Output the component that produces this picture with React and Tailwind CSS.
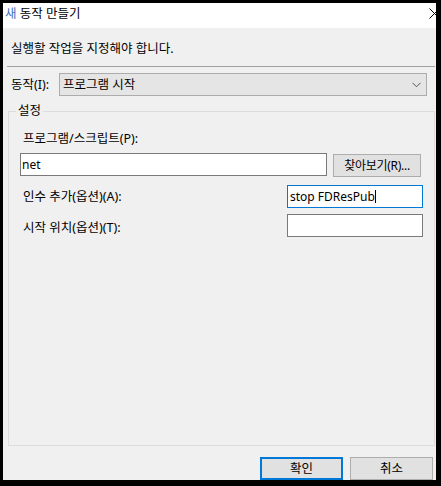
import React from "react";

const font = { fontFamily: '"Noto Sans", "Noto Sans CJK KR", sans-serif' };

function Chevron() {
  return (
    <svg width="9" height="6" viewBox="0 0 9 6" className="shrink-0">
      <path d="M0.5 0.8 L4.5 4.8 L8.5 0.8" fill="none" stroke="#555" strokeWidth="1" />
    </svg>
  );
}

function CloseX() {
  return (
    <svg width="11" height="11" viewBox="0 0 11 11" className="shrink-0 -mr-[4px]">
      <path d="M0.5 0.5 L10.5 10.5 M10.5 0.5 L0.5 10.5" fill="none" stroke="#000" strokeWidth="1" />
    </svg>
  );
}

export default function App() {
  return (
    <div className="w-[441px] h-[486px] bg-black pt-[3px] pl-[3px] text-[12.5px] text-black" style={font}>
      <div className="w-[433px] h-[477px] flex flex-col bg-[#f0f0f0] overflow-hidden">
        {/* title bar */}
        <div className="h-[25px] shrink-0 bg-white flex items-start justify-between pl-[2px] pt-[3px] overflow-hidden">
          <span className="leading-[16px]">
            <span className="text-[#3a74c2]">새</span> 동작 만들기
          </span>
          <div className="pt-[2px]">
            <CloseX />
          </div>
        </div>

        {/* body */}
        <div className="flex-1 flex flex-col">
          <div className="pt-[13px] pl-[8px] leading-[16px]">실행할 작업을 지정해야 합니다.</div>
          <div className="mt-[9px] ml-[4px] mr-[1px] h-px bg-[#a0a0a0]" />

          <div className="mt-[6px] pl-[8px] flex items-center">
            <span className="w-[48px] leading-[16px]">동작(I):</span>
            <div className="w-[368px] h-[23px] bg-[#e5e5e5] border border-[#acacac] flex items-center justify-between pl-[3px] pr-[5px]">
              <span className="leading-[16px]">프로그램 시작</span>
              <Chevron />
            </div>
          </div>

          {/* group box */}
          <div className="relative mt-[15px] ml-[5px] mr-[1px] flex-1 border border-[#dcdcdc] pl-[11px] pr-[11px] pt-[19px] flex flex-col">
            <span className="absolute -top-[9px] left-[7px] px-[2px] bg-[#f0f0f0] leading-[16px]">설정</span>

            <div className="ml-[3px] leading-[16px]">프로그램/스크립트(P):</div>

            <div className="mt-[6px] mr-[2px] flex items-start gap-[6px]">
              <div className="w-[308px] h-[23px] bg-white border border-[#7a7a7a] flex items-center pl-[1px]">
                <span className="leading-[16px] text-[12px]">net</span>
              </div>
              <div className="mt-[1px] w-[88px] h-[23px] bg-[#e1e1e1] border border-[#adadad] flex items-center justify-center">
                <span className="leading-[16px] text-[12px] tracking-[-0.3px]">찾아보기(R)...</span>
              </div>
            </div>

            <div className="mt-[8px] flex items-center justify-between">
              <span className="ml-[3px] leading-[16px]">인수 추가(옵션)(A):</span>
              <div className="w-[136px] h-[23px] bg-white border border-[#0078d7] flex items-center pl-[2px]">
                <span className="leading-[16px] text-[12px]">stop FDResPub</span>
                <span className="w-px h-[13px] bg-black" />
              </div>
            </div>

            <div className="mt-[6px] flex items-center justify-between">
              <span className="ml-[3px] mt-[4px] leading-[16px]">시작 위치(옵션)(T):</span>
              <div className="w-[136px] h-[23px] bg-white border border-[#7a7a7a]" />
            </div>
          </div>

          {/* buttons */}
          <div className="mt-[11px] pr-[3px] flex justify-end gap-[7px]">
            <div className="w-[83px] h-[23px] bg-[#e1e1e1] border-2 border-[#0078d7] flex items-center justify-center">
              <span className="leading-[16px]">확인</span>
            </div>
            <div className="w-[83px] h-[23px] bg-[#e1e1e1] border border-[#adadad] flex items-center justify-center">
              <span className="leading-[16px]">취소</span>
            </div>
          </div>
        </div>
      </div>
    </div>
  );
}
